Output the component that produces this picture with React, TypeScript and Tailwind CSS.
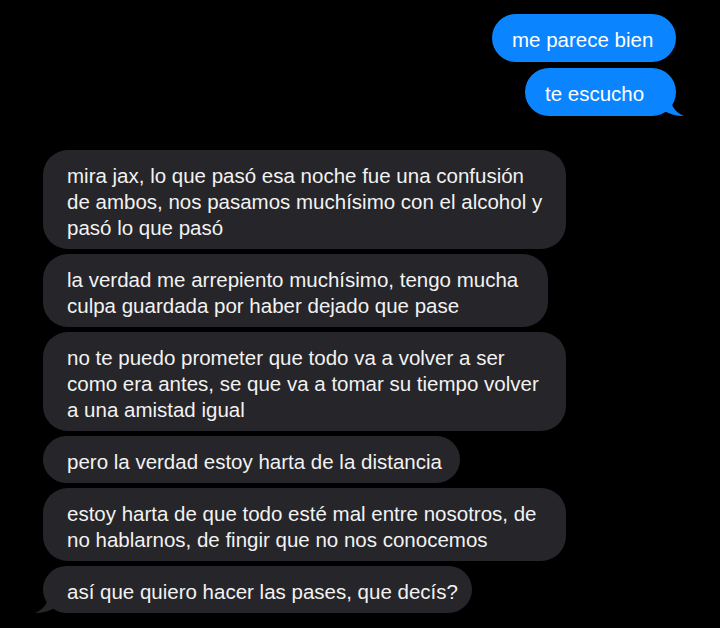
const font = "font-['Liberation_Sans','Helvetica_Neue',Arial,sans-serif]";

type Msg = { lines: string[]; width: string; tail?: boolean };

const sent: Msg[] = [
  { lines: ["me parece bien"], width: "w-[184px]" },
  { lines: ["te escucho"], width: "w-[151px]", tail: true },
];

const received: Msg[] = [
  {
    lines: [
      "mira jax, lo que pasó esa noche fue una confusión",
      "de ambos, nos pasamos muchísimo con el alcohol y",
      "pasó lo que pasó",
    ],
    width: "w-[523px]",
  },
  {
    lines: [
      "la verdad me arrepiento muchísimo, tengo mucha",
      "culpa guardada por haber dejado que pase",
    ],
    width: "w-[505px]",
  },
  {
    lines: [
      "no te puedo prometer que todo va a volver a ser",
      "como era antes, se que va a tomar su tiempo volver",
      "a una amistad igual",
    ],
    width: "w-[523px]",
  },
  { lines: ["pero la verdad estoy harta de la distancia"], width: "w-[417px]" },
  {
    lines: [
      "estoy harta de que todo esté mal entre nosotros, de",
      "no hablarnos, de fingir que no nos conocemos",
    ],
    width: "w-[523px]",
  },
  {
    lines: ["así que quiero hacer las pases, que decís?"],
    width: "w-[429px]",
    tail: true,
  },
];

function Lines({ lines }: { lines: string[] }) {
  return (
    <>
      {lines.map((l, i) => (
        <div key={i} className="whitespace-nowrap">
          {l}
        </div>
      ))}
    </>
  );
}

function SentBubble({ msg }: { msg: Msg }) {
  return (
    <div
      className={`relative ${msg.width} rounded-[25px] bg-[#0a84ff] pl-[20px] pt-[13px] pb-[9px] text-[20.5px] leading-[26px] text-white`}
    >
      <Lines lines={msg.lines} />
      {msg.tail && (
        <svg
          className="absolute -right-[8px] bottom-0"
          width="28"
          height="22"
          viewBox="0 0 28 22"
        >
          <path d="M14 0 C14 10 18 18 28 22 C20 22 14 20 8 17 L0 17 L0 0 Z" fill="#0a84ff" />
        </svg>
      )}
    </div>
  );
}

function ReceivedBubble({ msg }: { msg: Msg }) {
  return (
    <div
      className={`relative ${msg.width} rounded-[25px] bg-[#262529] pl-[24px] pt-[13px] pb-[8px] text-[20.5px] leading-[26px] text-[#f2f2f2]`}
    >
      <Lines lines={msg.lines} />
      {msg.tail && (
        <svg
          className="absolute -left-[8px] bottom-0"
          width="28"
          height="22"
          viewBox="0 0 28 22"
        >
          <path d="M14 0 C14 10 10 18 0 22 C8 22 14 20 20 17 L28 17 L28 0 Z" fill="#262529" />
        </svg>
      )}
    </div>
  );
}

export default function App() {
  return (
    <div className={`h-[628px] w-[720px] overflow-hidden bg-black ${font}`}>
      <div className="flex flex-col items-end gap-[6px] pr-[44px] pt-[14px]">
        {sent.map((m, i) => (
          <SentBubble key={i} msg={m} />
        ))}
      </div>
      <div className="mt-[34px] flex flex-col items-start gap-[5px] pl-[43px]">
        {received.map((m, i) => (
          <ReceivedBubble key={i} msg={m} />
        ))}
      </div>
    </div>
  );
}
